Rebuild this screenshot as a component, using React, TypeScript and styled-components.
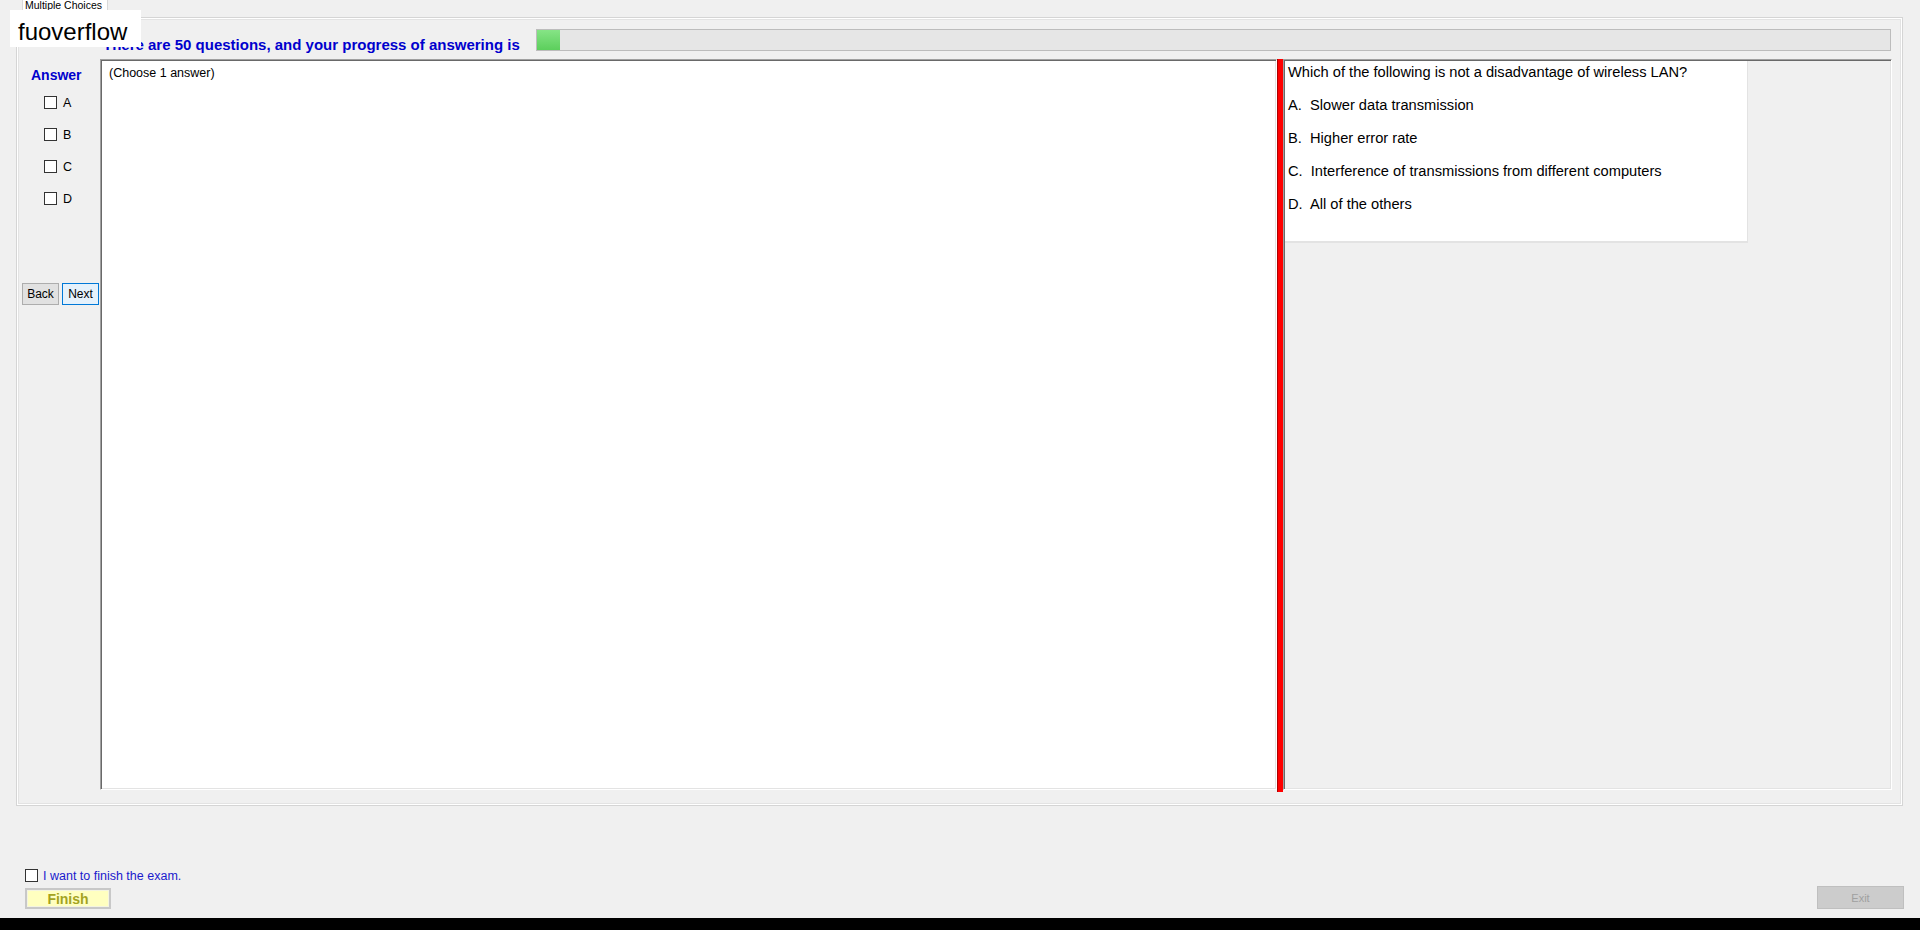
import React from 'react';
import styled, {createGlobalStyle} from 'styled-components';

const GlobalStyle = createGlobalStyle`
html, body {
    margin: 0;
    padding: 0;
    background: #f0f0f0;
    font-family: "Liberation Sans", Arial, sans-serif;
}
* {
    box-sizing: border-box;
}
`

const Page = styled.div`
position: relative;
width: 1920px;
height: 930px;
display: flex;
flex-direction: column;
overflow: hidden;
background: #f0f0f0;
`

const Watermark = styled.div`
position: absolute;
left: 10px;
top: 10px;
width: 131px;
height: 37px;
padding: 6px 0 0 8px;
background: #ffffff;
color: #000;
font-size: 24px;
line-height: 31px;
z-index: 5;
`

const TabStrip = styled.div`
height: 17px;
padding-left: 22px;
display: flex;
`

const Tab = styled.div`
width: 86px;
height: 17px;
padding-left: 2px;
border: 1px solid #d9d9d9;
border-top: none;
border-bottom: none;
background: #ffffff;
font-size: 10.5px;
line-height: 11px;
color: #000;
white-space: nowrap;
overflow: hidden;
`

const TabPage = styled.div`
margin-left: 16px;
width: 1887px;
height: 789px;
border: 1px solid #d5d5d5;
box-shadow: inset 0 0 0 1px #ffffff, inset 0 0 0 2px #e3e3e3;
padding: 0 10px 15px 5px;
display: grid;
grid-template-columns: 78px 1fr;
grid-template-rows: 41px 1fr;
`

const HeaderRow = styled.div`
grid-column: 2;
grid-row: 1;
display: flex;
align-items: flex-start;
gap: 16px;
padding: 11px 0 0 3px;
`

const HeaderText = styled.div`
margin-top: 7px;
font-size: 15px;
font-weight: bold;
line-height: 17px;
color: #0000cd;
white-space: nowrap;
`

const ProgressBar = styled.div`
flex: 1;
height: 22px;
margin-right: 1px;
border: 1px solid #bcbcbc;
background: #e6e6e6;
`

const ProgressFill = styled.div`
height: 100%;
background: linear-gradient(#86e486, #5ccf5c);
`

const AnswerColumn = styled.div`
grid-column: 1;
grid-row: 2;
display: flex;
flex-direction: column;
padding-top: 8px;
`

const AnswerTitle = styled.div`
padding-left: 9px;
font-size: 14px;
font-weight: bold;
line-height: 16px;
color: #0000cd;
`

const OptionList = styled.div`
margin-top: 13px;
padding-left: 22px;
display: flex;
flex-direction: column;
gap: 19px;
`

const OptionRow = styled.label`
display: flex;
align-items: center;
gap: 6px;
height: 13px;
font-size: 12.5px;
color: #000;
`

const Box = styled.span<{$size?: number}>`
display: inline-block;
width: ${p => p.$size ?? 13}px;
height: ${p => p.$size ?? 13}px;
border: 1px solid #333333;
background: #ffffff;
flex-shrink: 0;
`

const NavRow = styled.div`
margin-top: 78px;
display: flex;
gap: 3px;
`

const NavButton = styled.button<{$focused?: boolean}>`
width: 37px;
height: 22px;
padding: 0;
font-family: "Liberation Sans", Arial, sans-serif;
font-size: 12px;
color: #000;
background: ${p => p.$focused ? '#e5f1fb' : '#e1e1e1'};
border: 1px solid ${p => p.$focused ? '#0078d7' : '#adadad'};
`

const Split = styled.div`
grid-column: 2;
grid-row: 2;
display: flex;
`

const Sunken = styled.div`
border-top: 1px solid #a0a0a0;
border-left: 1px solid #a0a0a0;
border-right: 1px solid #ffffff;
border-bottom: 1px solid #ffffff;
box-shadow: inset 1px 1px 0 #696969, inset -1px -1px 0 #e3e3e3;
`

const LeftPane = styled(Sunken)`
width: 1177px;
background: #ffffff;
padding: 6px 8px;
font-size: 12.5px;
line-height: 15px;
color: #000;
`

const Splitter = styled.div`
width: 6px;
background: #ff0000;
border-left: 1px solid #b00000;
margin-bottom: -2px;
`

const RightPane = styled(Sunken)`
flex: 1;
background: #f0f0f0;
padding: 1px 0 0 1px;
`

const QuestionBox = styled.div`
width: 463px;
height: 182px;
background: #ffffff;
border-right: 1px solid #e3e3e3;
border-bottom: 2px solid #e3e3e3;
padding: 3px 4px 0 3px;
display: flex;
flex-direction: column;
gap: 16px;
`

const QuestionLine = styled.div`
font-size: 14.67px;
line-height: 17px;
color: #000;
white-space: pre;
`

const Footer = styled.div`
flex: 1;
display: flex;
justify-content: space-between;
align-items: flex-end;
padding: 0 16px 9px 25px;
`

const FinishGroup = styled.div`
display: flex;
flex-direction: column;
gap: 6px;
`

const FinishCheck = styled.label`
display: flex;
align-items: center;
gap: 5px;
height: 13px;
font-size: 12.5px;
color: #1a1acd;
`

const FinishButton = styled.button`
width: 86px;
height: 21px;
padding: 0;
background: #ffffc0;
border: 2px solid #c8c8c8;
box-shadow: inset 0 0 0 1px #f4f4e0;
font-family: "Liberation Sans", Arial, sans-serif;
font-size: 14px;
font-weight: bold;
color: #a3a31f;
`

const ExitButton = styled.button`
width: 87px;
height: 23px;
padding: 0;
background: #cccccc;
border: 1px solid #bfbfbf;
font-family: "Liberation Sans", Arial, sans-serif;
font-size: 11px;
color: #a0a0a0;
`

const BlackBar = styled.div`
height: 12px;
background: #000;
`

const options = [
    'A.  Slower data transmission',
    'B.  Higher error rate',
    'C.  Interference of transmissions from different computers',
    'D.  All of the others',
]

export default function App() {
    const progress = 23

    return (
        <Page>
            <GlobalStyle/>
            <Watermark>fuoverflow</Watermark>
            <TabStrip>
                <Tab>Multiple Choices</Tab>
            </TabStrip>
            <TabPage>
                <HeaderRow>
                    <HeaderText>There are 50 questions, and your progress of answering is</HeaderText>
                    <ProgressBar>
                        <ProgressFill style={{width: progress}}/>
                    </ProgressBar>
                </HeaderRow>
                <AnswerColumn>
                    <AnswerTitle>Answer</AnswerTitle>
                    <OptionList>
                        {['A', 'B', 'C', 'D'].map(l => (
                            <OptionRow key={l}><Box/>{l}</OptionRow>
                        ))}
                    </OptionList>
                    <NavRow>
                        <NavButton>Back</NavButton>
                        <NavButton $focused>Next</NavButton>
                    </NavRow>
                </AnswerColumn>
                <Split>
                    <LeftPane>(Choose 1 answer)</LeftPane>
                    <Splitter/>
                    <RightPane>
                        <QuestionBox>
                            <QuestionLine>Which of the following is not a disadvantage of wireless LAN?</QuestionLine>
                            {options.map(o => <QuestionLine key={o}>{o}</QuestionLine>)}
                        </QuestionBox>
                    </RightPane>
                </Split>
            </TabPage>
            <Footer>
                <FinishGroup>
                    <FinishCheck><Box $size={13}/>I want to finish the exam.</FinishCheck>
                    <FinishButton>Finish</FinishButton>
                </FinishGroup>
                <ExitButton>Exit</ExitButton>
            </Footer>
            <BlackBar/>
        </Page>
    );
}
